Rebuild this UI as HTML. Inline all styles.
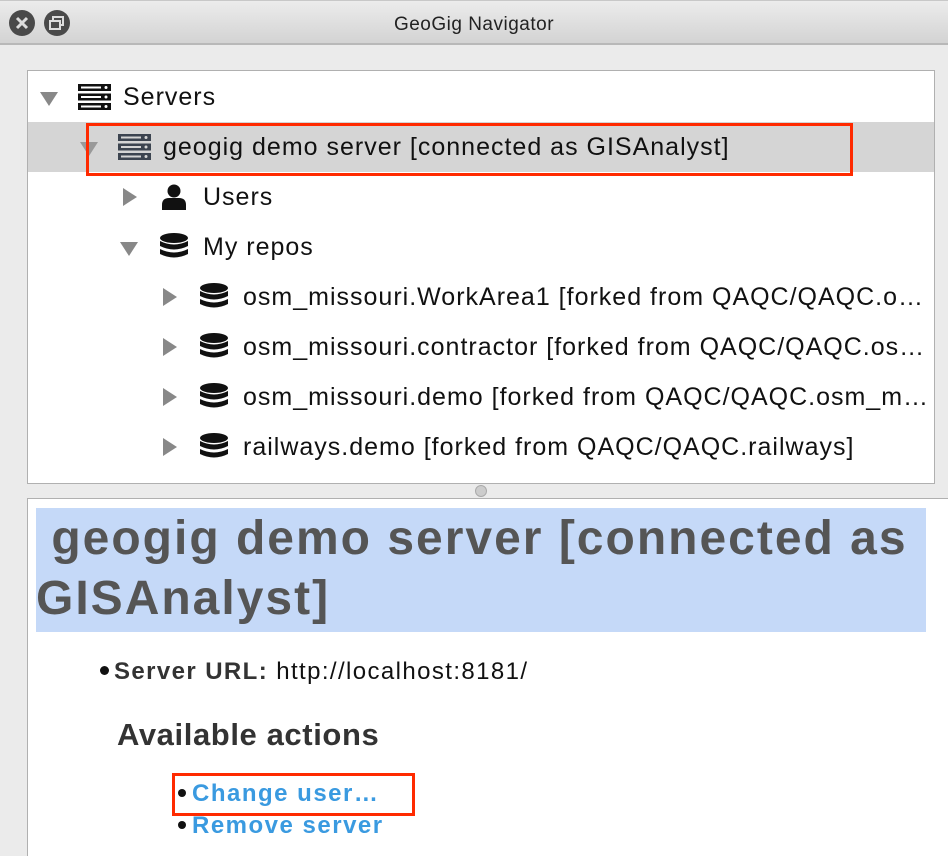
<!DOCTYPE html>
<html><head><meta charset="utf-8"><style>
*{margin:0;padding:0;box-sizing:border-box}
body{width:948px;height:856px;overflow:hidden;background:#ebebeb;font-family:"Liberation Sans",sans-serif;position:relative}
.tb{position:absolute;left:0;top:0;width:948px;height:45px;background:linear-gradient(#ececec,#d3d3d3);border-bottom:2px solid #b8b8b8;border-top:1px solid #c8c8c8}
.tb .t{position:absolute;left:0;right:0;top:13px;text-align:center;font-size:19px;color:#222;letter-spacing:0.5px}
.btn{position:absolute;top:9px;width:26px;height:26px;border-radius:50%;background:#4a4a4a}
.tree{position:absolute;left:27px;top:70px;width:908px;height:414px;background:#fff;border:1px solid #b0b0b0}
.row{position:absolute;left:0;width:906px;height:50px;font-size:25px;letter-spacing:1px;color:#111;line-height:50px}
.row span{position:absolute;white-space:nowrap}
.tri{position:absolute;width:0;height:0}
.down{border-left:9px solid transparent;border-right:9px solid transparent;border-top:14px solid #888}
.right{border-top:9px solid transparent;border-bottom:9px solid transparent;border-left:14px solid #888}
.ic{position:absolute}
.low{position:absolute;left:27px;top:498px;width:921px;height:358px;background:#fff;border-left:1px solid #b0b0b0;border-top:1px solid #b0b0b0}
.dot{display:inline-block;width:9px;height:9px;border-radius:50%;background:#111;vertical-align:middle;margin-right:5px;position:relative;top:-2px}
</style></head><body>
<div class="tb"><div class="btn" style="left:9px"><svg width="26" height="26"><path d="M8 8L18 18M18 8L8 18" stroke="#ddd" stroke-width="3"/></svg></div><div class="btn" style="left:44px"><svg width="26" height="26"><rect x="9" y="7" width="10" height="8" fill="none" stroke="#ddd" stroke-width="2"/><rect x="6" y="11" width="10" height="8" fill="#4a4a4a" stroke="#ddd" stroke-width="2"/></svg></div><div class="t">GeoGig Navigator</div></div>
<div class="tree">
<div class="row" style="top:1px"><div class="tri down" style="left:12px;top:20px"></div>
<svg class="ic" style="left:50px;top:12px" width="33" height="26"><g fill="#111"><rect x="0" y="0" width="33" height="7"/><rect x="0" y="9.5" width="33" height="7"/><rect x="0" y="19" width="33" height="7"/></g><g fill="#fff"><rect x="3" y="2.5" width="20" height="2"/><rect x="3" y="12" width="20" height="2"/><rect x="3" y="21.5" width="20" height="2"/><circle cx="28" cy="3.5" r="1.5"/><circle cx="28" cy="13" r="1.5"/><circle cx="28" cy="22.5" r="1.5"/></g></svg>
<span style="left:95px">Servers</span></div>
<div class="row" style="top:51px;background:#d5d5d5"><div class="tri down" style="left:52px;top:20px;border-top-color:#999"></div>
<svg class="ic" style="left:90px;top:12px" width="33" height="26"><g fill="#3c4450"><rect x="0" y="0" width="33" height="7"/><rect x="0" y="9.5" width="33" height="7"/><rect x="0" y="19" width="33" height="7"/></g><g fill="#d5d5d5"><rect x="3" y="2.5" width="20" height="2"/><rect x="3" y="12" width="20" height="2"/><rect x="3" y="21.5" width="20" height="2"/><circle cx="28" cy="3.5" r="1.5"/><circle cx="28" cy="13" r="1.5"/><circle cx="28" cy="22.5" r="1.5"/></g></svg>
<span style="left:135px">geogig demo server [connected as GISAnalyst]</span></div>
<div class="row" style="top:101px"><div class="tri right" style="left:95px;top:16px"></div>
<svg class="ic" style="left:134px;top:12px" width="24" height="26"><circle cx="12" cy="7" r="6.5" fill="#111"/><path d="M0 26V21Q0 14 7 14H17Q24 14 24 21V26Z" fill="#111"/></svg>
<span style="left:175px">Users</span></div>
<div class="row" style="top:151px"><div class="tri down" style="left:92px;top:20px"></div>
<svg class="ic" style="left:132px;top:11px" width="28" height="28"><g fill="#111"><ellipse cx="14" cy="5" rx="14" ry="5"/><path d="M0 8Q14 15 28 8V13Q14 20 0 13Z"/><path d="M0 16Q14 23 28 16V21Q14 28 0 21Z"/></g></svg>
<span style="left:175px">My repos</span></div>
<div class="row" style="top:201px"><div class="tri right" style="left:135px;top:16px"></div>
<svg class="ic" style="left:172px;top:11px" width="28" height="28"><g fill="#111"><ellipse cx="14" cy="5" rx="14" ry="5"/><path d="M0 8Q14 15 28 8V13Q14 20 0 13Z"/><path d="M0 16Q14 23 28 16V21Q14 28 0 21Z"/></g></svg>
<span style="left:215px">osm_missouri.WorkArea1 [forked from QAQC/QAQC.o…</span></div>
<div class="row" style="top:251px"><div class="tri right" style="left:135px;top:16px"></div>
<svg class="ic" style="left:172px;top:11px" width="28" height="28"><g fill="#111"><ellipse cx="14" cy="5" rx="14" ry="5"/><path d="M0 8Q14 15 28 8V13Q14 20 0 13Z"/><path d="M0 16Q14 23 28 16V21Q14 28 0 21Z"/></g></svg>
<span style="left:215px">osm_missouri.contractor [forked from QAQC/QAQC.os…</span></div>
<div class="row" style="top:301px"><div class="tri right" style="left:135px;top:16px"></div>
<svg class="ic" style="left:172px;top:11px" width="28" height="28"><g fill="#111"><ellipse cx="14" cy="5" rx="14" ry="5"/><path d="M0 8Q14 15 28 8V13Q14 20 0 13Z"/><path d="M0 16Q14 23 28 16V21Q14 28 0 21Z"/></g></svg>
<span style="left:215px">osm_missouri.demo [forked from QAQC/QAQC.osm_m…</span></div>
<div class="row" style="top:351px"><div class="tri right" style="left:135px;top:16px"></div>
<svg class="ic" style="left:172px;top:11px" width="28" height="28"><g fill="#111"><ellipse cx="14" cy="5" rx="14" ry="5"/><path d="M0 8Q14 15 28 8V13Q14 20 0 13Z"/><path d="M0 16Q14 23 28 16V21Q14 28 0 21Z"/></g></svg>
<span style="left:215px">railways.demo [forked from QAQC/QAQC.railways]</span></div>
</div>
<div style="position:absolute;left:86px;top:123px;width:767px;height:53px;border:3px solid #ff2a00"></div>
<div style="position:absolute;left:475px;top:485px;width:12px;height:12px;border-radius:50%;background:#ccc;border:1px solid #aaa"></div>
<div class="low"></div>
<div style="position:absolute;left:36px;top:508px;width:890px;height:124px;background:#c5d9f8"></div>
<div style="position:absolute;left:36px;top:509px;width:900px;font-size:48px;font-weight:bold;color:#555;line-height:60px;letter-spacing:2px">&nbsp;geogig demo server [connected as GISAnalyst]</div>
<div style="position:absolute;left:100px;top:658px;font-size:24px;color:#111;white-space:nowrap;letter-spacing:1.4px"><span class="dot"></span><b style="color:#333">Server URL:</b> http://localhost:8181/</div>
<div style="position:absolute;left:117px;top:717px;font-size:31px;font-weight:bold;color:#333;letter-spacing:0.6px">Available actions</div>
<div style="position:absolute;left:178px;top:780px;font-size:24px;font-weight:bold;color:#3a9ae0;white-space:nowrap;letter-spacing:1.5px"><span class="dot" style="width:8px;height:8px;margin-right:6px"></span>Change user…</div>
<div style="position:absolute;left:178px;top:812px;font-size:24px;font-weight:bold;color:#3a9ae0;white-space:nowrap;letter-spacing:1.5px"><span class="dot" style="width:8px;height:8px;margin-right:6px"></span>Remove server</div>
<div style="position:absolute;left:172px;top:773px;width:243px;height:43px;border:3px solid #ff2a00"></div>
</body></html>
